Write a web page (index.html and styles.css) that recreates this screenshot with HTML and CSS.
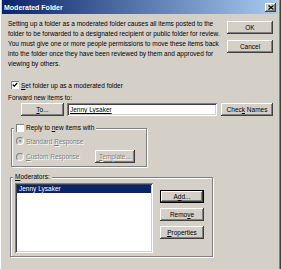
FILE: index.html
```html
<!DOCTYPE html>
<html>
<head>
<meta charset="utf-8">
<title>Moderated Folder</title>
<link rel="stylesheet" href="styles.css">
</head>
<body>
<div class="window">
  <div class="titlebar">
    <span class="title">Moderated Folder</span>
    <span class="close"><svg width="6" height="5" viewBox="0 0 6 5"><path d="M0.5 0.5L5.5 4.5M5.5 0.5L0.5 4.5" stroke="#000" stroke-width="1.2"/></svg></span>
  </div>
  <div class="content">
    <div class="intro">
      <p class="desc">Setting up a folder as a moderated folder causes all items posted to the<br>folder to be forwarded to a designated recipient or public folder for review.<br>You must give one or more people permissions to move these items back<br>into the folder once they have been reviewed by them and approved for<br>viewing by others.</p>
      <div class="stack">
        <button class="btn">OK</button>
        <button class="btn">Cancel</button>
      </div>
    </div>
    <div class="checkrow">
      <span class="cb"><svg width="8" height="8" viewBox="0 0 8 8"><path d="M1.8 3.6L3.3 5.1L6.3 2" fill="none" stroke="#000" stroke-width="1.3"/></svg></span>
      <span><u>S</u>et folder up as a moderated folder</span>
    </div>
    <div class="fwd-label">Forward new items to:</div>
    <div class="fwd-row">
      <button class="btn to"><u>T</u>o...</button>
      <div class="textbox"><u>Jenny Lysaker</u></div>
      <button class="btn check">Chec<u>k</u> Names</button>
    </div>
    <div class="group reply">
      <div class="legend"><span class="cb"></span><span>Reply to <u>n</u>ew items with</span></div>
      <div class="radio-row"><span class="radio on"></span><span class="dis">Standard <u>R</u>esponse</span></div>
      <div class="radio-row"><span class="radio"></span><span class="dis"><u>C</u>ustom Response</span><button class="btn template dis"><u>T</u>emplate...</button></div>
    </div>
    <div class="group mods">
      <div class="legend"><span><u>M</u>oderators:</span></div>
      <div class="mods-body">
        <div class="listbox"><div class="item sel">Jenny Lysaker</div></div>
        <div class="stack mods-stack">
          <button class="btn small def">A<u>d</u>d...</button>
          <button class="btn small">Remo<u>v</u>e</button>
          <button class="btn small"><u>P</u>roperties</button>
        </div>
      </div>
    </div>
  </div>
</div>
</body>
</html>
```
FILE: styles.css
```css
html, body {
  margin: 0;
  padding: 0;
}
body {
  width: 281px;
  height: 269px;
  overflow: hidden;
  background: #d4d0c8;
  font-family: "Liberation Sans", Arial, sans-serif;
  font-size: 6.5px;
  color: #000;
}
.window {
  height: 269px;
  box-sizing: border-box;
  padding: 0 3px 0 2px;
  box-shadow: inset 1px 0 #fff, inset -1px 0 #404040, inset -2px 0 #808080;
}
.titlebar {
  height: 14px;
  display: flex;
  align-items: center;
  justify-content: space-between;
  padding: 0 2px 0 2px;
  background: linear-gradient(to right, #0a246a, #a6caf0);
  color: #fff;
  font-weight: bold;
  font-size: 7px;
}
.close {
  width: 11px;
  height: 9px;
  background: #d4d0c8;
  display: flex;
  align-items: center;
  justify-content: center;
  box-shadow: inset -1px -1px #404040, inset 1px 1px #fff, inset -2px -2px #808080;
}
.close svg { display: block; }
.content {
  padding: 0 5px 0 6px;
}
.intro {
  display: flex;
  justify-content: space-between;
  margin-top: 5px;
}
.desc {
  margin: 0;
  line-height: 10px;
  white-space: nowrap;
}
.stack {
  display: flex;
  flex-direction: column;
  gap: 6px;
  margin-top: 2px;
}
.btn {
  width: 46px;
  height: 13px;
  padding: 0;
  margin: 0;
  border: none;
  background: #d4d0c8;
  font: inherit;
  color: #000;
  line-height: 13px;
  text-align: center;
  white-space: nowrap;
  box-shadow: inset -1px -1px #404040, inset 1px 1px #fff, inset -2px -2px #808080;
}
.btn.def {
  box-shadow: inset 0 0 0 1px #000, inset -2px -2px #404040, inset 2px 2px #fff, inset -3px -3px #808080;
}
.cb {
  width: 8px;
  height: 8px;
  box-sizing: border-box;
  background: #fff;
  box-shadow: inset 1px 1px #808080, inset -1px -1px #fff;
  display: inline-block;
  flex: none;
}
.cb svg { display: block; }
.checkrow {
  display: flex;
  align-items: center;
  gap: 2px;
  height: 10px;
  margin: 11px 0 0 3px;
}
.fwd-label {
  margin-top: 3px;
  line-height: 10px;
}
.fwd-row {
  display: flex;
  align-items: center;
  margin-left: 13px;
}
.btn.to {
  width: 43px;
}
.textbox {
  width: 150px;
  height: 13px;
  box-sizing: border-box;
  margin-left: 3px;
  padding-left: 3px;
  line-height: 13px;
  background: #fff;
  box-shadow: inset 1px 1px #808080, inset -1px -1px #fff, inset 2px 2px #404040, inset -2px -2px #d4d0c8;
}
.btn.check {
  width: 52px;
  margin-left: 4px;
}
.group {
  position: relative;
  box-sizing: border-box;
  border: 1px solid #808080;
  box-shadow: inset 1px 1px #fff, 1px 1px #fff;
}
.legend {
  position: absolute;
  top: -6px;
  left: 2px;
  padding: 0 2px;
  height: 10px;
  line-height: 10px;
  display: flex;
  align-items: center;
  gap: 2px;
  background: #d4d0c8;
}
.reply {
  width: 136px;
  margin: 12px 0 0 3px;
  padding: 7px 11px 3px 4px;
  display: flex;
  flex-direction: column;
  gap: 4px;
}
.radio-row {
  display: flex;
  align-items: center;
  gap: 2px;
  min-height: 10px;
}
.radio {
  width: 8px;
  height: 8px;
  box-sizing: border-box;
  border-radius: 50%;
  border: 1px solid;
  border-color: #808080 #fff #fff #808080;
  background: #d4d0c8;
  display: flex;
  align-items: center;
  justify-content: center;
  flex: none;
}
.radio.on::after {
  content: "";
  width: 2px;
  height: 2px;
  border-radius: 50%;
  background: #808080;
}
.dis {
  color: #808080;
  text-shadow: 1px 1px #fff;
}
.btn.template {
  width: 40px;
  margin-left: auto;
}
.mods {
  width: 203px;
  height: 80px;
  margin: 10px 0 0 2px;
  padding: 5px 0 0 4px;
}
.mods-body {
  display: flex;
  gap: 7px;
}
.listbox {
  width: 138px;
  height: 70px;
  box-sizing: border-box;
  padding: 2px;
  background: #fff;
  box-shadow: inset 1px 1px #808080, inset -1px -1px #fff, inset 2px 2px #404040, inset -2px -2px #d4d0c8;
}
.item {
  height: 8px;
  line-height: 8px;
  padding-left: 2px;
}
.item.sel {
  background: #0a246a;
  color: #fff;
}
.mods-stack {
  margin-top: 7px;
  gap: 5px;
}
.btn.small {
  width: 44px;
}
```
